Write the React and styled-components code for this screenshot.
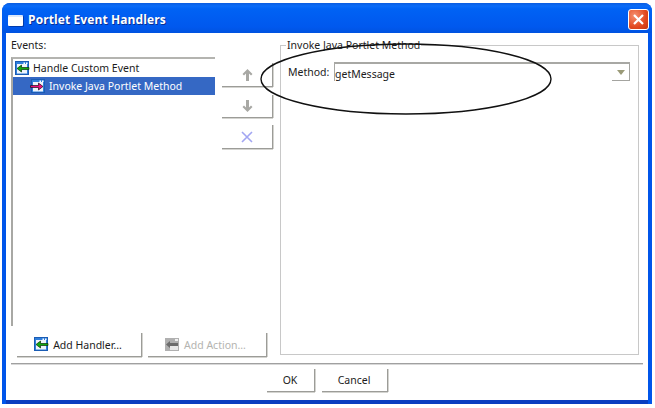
import React from "react";
import styled, { createGlobalStyle } from "styled-components";

const Global = createGlobalStyle`
  html, body { margin: 0; padding: 0; background: #fff; }
  body { font-family: "Noto Sans", "Liberation Sans", sans-serif; }
  * { box-sizing: border-box; }
`;
const font = `font: 10.5px/14px "Noto Sans", "Liberation Sans", sans-serif; color: #1c1c1c;`;

const Page = styled.div`width: 655px; height: 408px; padding: 3px 3px 4px 2px;`;
const Window = styled.div`
  position: relative; width: 650px; height: 401px; display: flex; flex-direction: column;
  border-radius: 8px 8px 0 0; overflow: hidden; background: #0055ea;
`;
const TitleBar = styled.div`
  height: 30px; flex: none; display: flex; align-items: flex-end; padding: 0 3px 3px 6px; gap: 5px;
  background: linear-gradient(#0a5ce0 0, #0a6cf8 3px, #0062f4 6px, #0058ee 24px, #0053e0 100%);
`;
const AppIcon = styled.div`
  width: 15px; height: 11px; margin-bottom: 4px; background: #fff; border-top: 2px solid #dce8fa; border-radius: 1px;
  box-shadow: 1px 1px 0 #003cae; flex: none;
`;
const Title = styled.div`
  flex: 1; color: #fff; font: bold 12px/16px "Open Sans", "Noto Sans", sans-serif; margin-bottom: 2px;
  text-shadow: 1px 1px 0 #0a2f94; letter-spacing: 0.1px;
`;
const Close = styled.div`
  width: 21px; height: 21px; flex: none; display: flex; align-items: center; justify-content: center;
  border: 1px solid #fff; border-radius: 3px;
  background: radial-gradient(circle at 30% 30%, #f59070, #e2491f 60%, #c43510);
`;
const Body = styled.div`
  flex: 1; min-height: 0; display: flex; flex-direction: column; background: #fff;
  margin: 0 4px 4px 4px; box-shadow: 0 4px 0 #0a3ec0;
`;
const Main = styled.div`flex: none; height: 328px; display: flex; padding: 5px 9px 0 5px; gap: 7px;`;
const LeftArea = styled.div`width: 262px; flex: none; display: flex; flex-direction: column;`;
const TopRow = styled.div`flex: 1; min-height: 0; display: flex; gap: 7px;`;
const EventsColumn = styled.div`width: 204px; flex: none; display: flex; flex-direction: column;`;
const Label = styled.div`${font} height: 19px;`;
const Tree = styled.div`
  flex: 1; padding: 0; border-left: 2px solid #a8a8a4; border-top: 2px solid #b4b4b0;
`;
const TreeRow = styled.div`
  ${font} height: 18px; display: flex; align-items: center; gap: 3px;
  padding-left: ${p => p.$indent}px;
  background: ${p => (p.$selected ? "#3568c4" : "transparent")};
  color: ${p => (p.$selected ? "#fff" : "#1c1c1c")};
`;
const ArrowColumn = styled.div`width: 51px; flex: none; display: flex; flex-direction: column; padding-top: 25px;`;
const Button = styled.div`
  ${font} display: flex; align-items: center; justify-content: center; gap: 4px; flex: none;
  width: ${p => p.$w}px; height: ${p => p.$h}px; margin-bottom: ${p => p.$mb || 0}px;
  padding-right: ${p => p.$pr || 0}px;
  background: #fff; border-right: 1px solid #9c9c98; border-bottom: 1px solid #9c9c98;
  box-shadow: 0 1px 0 #d4d4d0, 1px 0 0 #d4d4d0;
  color: ${p => (p.$disabled ? "#b4b4b0" : "#1c1c1c")};
`;
const ActionRow = styled.div`flex: none; height: 35px; display: flex; gap: 6px; padding: 7px 0 0 6px;`;
const Group = styled.fieldset`
  flex: none; width: 359px; margin: 0; padding: 10px 8px 0 7px; height: 317px;
  border: 1px solid #c8c8c8; display: block;
`;
const Legend = styled.legend`${font} padding: 0 1px; margin-left: -2px;`;
const MethodRow = styled.div`display: flex; align-items: center;`;
const MethodLabel = styled.div`${font} width: 46px; flex: none;`;
const Combo = styled.div`
  ${font} flex: 1; height: 19px; display: flex; align-items: center; justify-content: space-between;
  border-top: 2px solid #a8a8a4; border-left: 1px solid #a8a8a4;
`;
const ComboText = styled.span`position: relative; top: 1px;`;
const ComboArrow = styled.div`
  width: 18px; height: 17px; display: flex; align-items: center; justify-content: center;
  border-right: 1px solid #a4a4a0; border-bottom: 1px solid #a4a4a0;
`;
const Separator = styled.div`
  flex: none; height: 2px; margin: 2px 5px 0; background: #a0a0a0; border-bottom: 1px solid #d8d8d8;
`;
const Footer = styled.div`flex: 1; display: flex; justify-content: center; gap: 7px; padding-top: 4px;`;
const Oval = styled.svg`position: absolute; left: 258px; top: 38px; pointer-events: none;`;

const HandlerIcon = ({ pink, dim }) => {
  if (dim) {
    return (
      <svg width="16" height="15" viewBox="0 0 16 15" style={{ flex: "none" }}>
        <rect x="1" y="1" width="14" height="13" fill="#b0b0b0" />
        <rect x="6" y="8" width="8" height="5" fill="#e8e8e8" />
        <path d="M2 7.5L6 4v2h8v3H6v2z" fill="#6c6c6c" />
        <rect x="11" y="2" width="3" height="2" fill="#f0f0f0" />
      </svg>
    );
  }
  return (
    <svg width="16" height="15" viewBox="0 0 16 15" style={{ flex: "none" }}>
      <rect x="1.5" y="0.5" width="13" height="13" fill="#2f7fdc" stroke="#1a5cb4" />
      <rect x="3" y="3" width="10" height="9.5" fill="#eef4fc" />
      <rect x="9.5" y="1.5" width="1.5" height="1.5" fill="#fff" />
      <rect x="12" y="1.5" width="1.5" height="1.5" fill="#fff" />
      {pink ? (
        <path d="M0.5 6.5h8V4l4.5 3.5L8.5 11V8.5h-8z" fill="#ec1080" stroke="#1e0a18" strokeWidth="0.7" />
      ) : (
        <path d="M15 6.5H7.5V4L3 7.5 7.5 11V8.5H15z" fill="#10a810" stroke="#083008" strokeWidth="0.7" />
      )}
    </svg>
  );
};
const UpIcon = () => (
  <svg width="11" height="14" viewBox="0 0 11 14"><path d="M5.5 1L.5 6 2 7.5 4 5.5V13H7V5.5L9 7.5 10.5 6z" fill="#a8a8a4" /></svg>
);
const DownIcon = () => (
  <svg width="11" height="14" viewBox="0 0 11 14"><path d="M5.5 13L.5 8 2 6.5 4 8.5V1H7V8.5L9 6.5 10.5 8z" fill="#a8a8a4" /></svg>
);
const CrossIcon = () => (
  <svg width="12" height="12" viewBox="0 0 12 12"><path d="M1 1L11 11M11 1L1 11" stroke="#a2a6f2" strokeWidth="1.6" /></svg>
);

export default function App() {
  return (
    <Page>
      <Global />
      <Window>
        <TitleBar>
          <AppIcon />
          <Title>Portlet Event Handlers</Title>
          <Close>
            <svg width="11" height="11" viewBox="0 0 11 11"><path d="M1 1L10 10M10 1L1 10" stroke="#fff" strokeWidth="2.2" /></svg>
          </Close>
        </TitleBar>
        <Body>
          <Main>
            <LeftArea>
              <TopRow>
                <EventsColumn>
                  <Label>Events:</Label>
                  <Tree>
                    <TreeRow $indent={1}><HandlerIcon />Handle Custom Event</TreeRow>
                    <TreeRow $indent={17} $selected><HandlerIcon pink />Invoke Java Portlet Method</TreeRow>
                  </Tree>
                </EventsColumn>
                <ArrowColumn>
                  <Button $w={51} $h={24} $mb={8}><UpIcon /></Button>
                  <Button $w={51} $h={23} $mb={7}><DownIcon /></Button>
                  <Button $w={51} $h={24}><CrossIcon /></Button>
                </ArrowColumn>
              </TopRow>
              <ActionRow>
                <Button $w={125} $h={24} $pr={3}><HandlerIcon />Add Handler...</Button>
                <Button $w={119} $h={24} $pr={4} $disabled><HandlerIcon dim />Add Action...</Button>
              </ActionRow>
            </LeftArea>
            <Group>
              <Legend>Invoke Java Portlet Method</Legend>
              <MethodRow>
                <MethodLabel>Method:</MethodLabel>
                <Combo>
                  <ComboText>getMessage</ComboText>
                  <ComboArrow>
                    <svg width="8" height="5" viewBox="0 0 8 5"><path d="M0 0H8L4 5z" fill="#9a9a78" /></svg>
                  </ComboArrow>
                </Combo>
              </MethodRow>
            </Group>
          </Main>
          <Separator />
          <Footer>
            <Button $w={48} $h={23}>OK</Button>
            <Button $w={66} $h={23}>Cancel</Button>
          </Footer>
        </Body>
        <Oval width="296" height="76" viewBox="0 0 296 76">
          <ellipse cx="146" cy="38" rx="145" ry="35" fill="none" stroke="#111" strokeWidth="1.4" />
        </Oval>
      </Window>
    </Page>
  );
}
